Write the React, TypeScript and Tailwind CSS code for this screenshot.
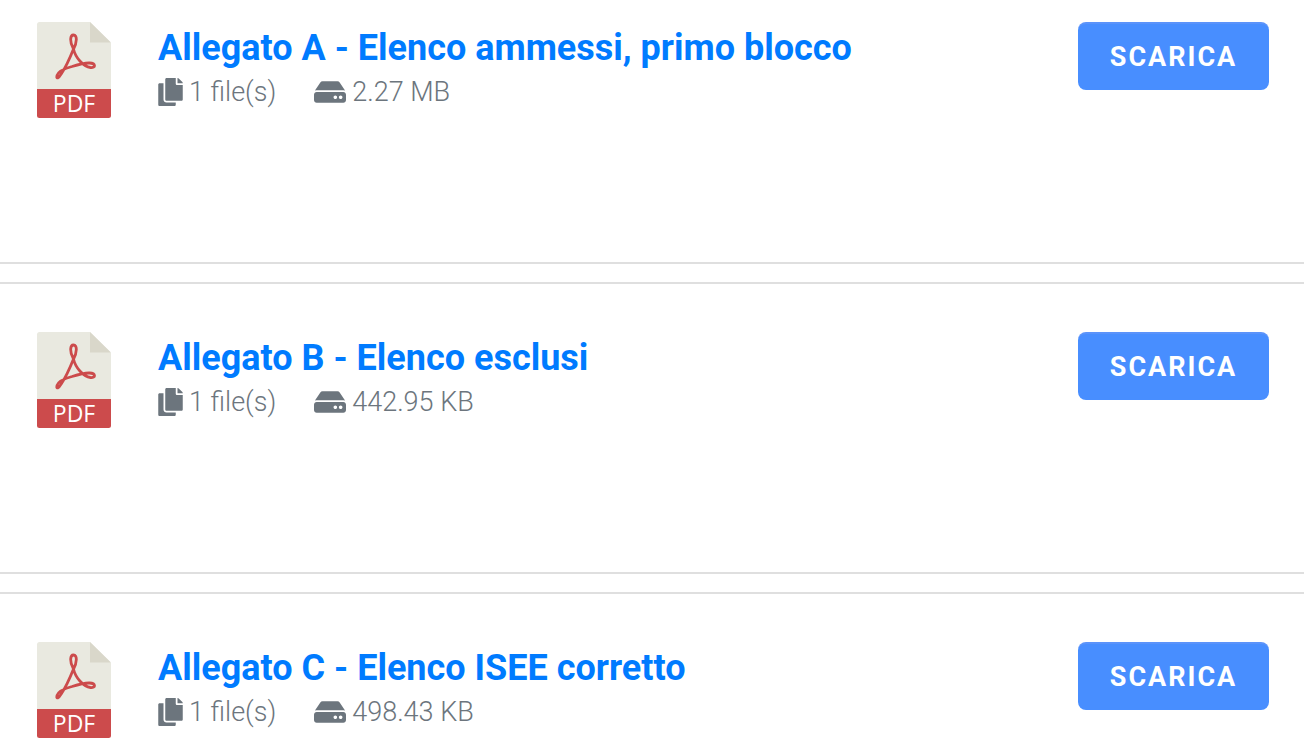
import { FaCopy, FaHdd } from "react-icons/fa";

type Attachment = { title: string; files: number; size: string };

const attachments: Attachment[] = [
  { title: "Allegato A - Elenco ammessi, primo blocco", files: 1, size: "2.27 MB" },
  { title: "Allegato B - Elenco esclusi", files: 1, size: "442.95 KB" },
  { title: "Allegato C - Elenco ISEE corretto", files: 1, size: "498.43 KB" },
];

function PdfIcon() {
  return (
    <svg viewBox="0 0 74 96" className="h-24 w-[74px] shrink-0 overflow-visible" role="img" aria-label="PDF">
      <path d="M2.5 0H53L74 21V68H0V2.5Q0 0 2.5 0Z" fill="#e9e9e0" />
      <path d="M53 0L74 20.500H53Z" fill="#d9d7ca" />
      <path d="M0 67H74V93.500Q74 96 71.500 96H2.500Q0 96 0 93.500Z" fill="#cc4b4c" />
      <path
        d="M36.300 26.500C32.500 20 33 13 36.500 13C40.300 13 40.300 20 36.300 27.500C32.500 37 28.500 45.500 24.500 51.500C21.500 56.500 19 57.500 20 53.500C21 50 27.500 46.500 35 44.500C42 42.300 47.500 40.800 52.500 41C59 41.300 59 46 53.500 45.500C46.500 44.700 38.500 36 36.300 26.500Z"
        fill="none"
        stroke="#cc4b4c"
        strokeWidth="2.800"
        strokeLinejoin="round"
      />
      <text
        x="37"
        y="90"
        textAnchor="middle"
        fill="#fff"
        fontSize="23"
        fontWeight="500"
        fontFamily="'Open Sans', sans-serif"
      >
        PDF
      </text>
    </svg>
  );
}

function AttachmentRow({ title, files, size }: Attachment) {
  return (
    <li className="flex min-h-[292px] items-start border-y-2 border-[#dfdfdf] pt-12 pr-[35px] pl-[37px] first:min-h-[264px] first:border-t-0 first:pt-[22px] last:min-h-0 last:border-b-0 last:pb-4">
      <PdfIcon />
      <div className="ml-[47px] min-w-0 flex-1">
        <h3 className="pt-1 text-[36px] leading-[44px] font-bold text-[#007bff]">
          <a href="#">{title}</a>
        </h3>
        <div className="flex gap-[38px] text-[27px] leading-[44px] font-light text-[#6c757d]">
          <span className="flex items-center gap-1.5">
            <FaCopy className="h-7 w-[25px]" />
            {files} file(s)
          </span>
          <span className="flex items-center gap-1.5">
            <FaHdd className="size-8" />
            {size}
          </span>
        </div>
      </div>
      <button
        type="button"
        className="h-[68px] w-[191px] shrink-0 rounded-lg border-t-2 border-[#5b93fa] bg-[#488eff] text-[27px] font-bold tracking-[2px] text-white"
      >
        SCARICA
      </button>
    </li>
  );
}

export default function App() {
  return (
    <main className="bg-white font-['Roboto','Open_Sans',sans-serif]">
      <ul className="flex flex-col gap-[18px]">
        {attachments.map((item) => (
          <AttachmentRow key={item.title} {...item} />
        ))}
      </ul>
    </main>
  );
}
